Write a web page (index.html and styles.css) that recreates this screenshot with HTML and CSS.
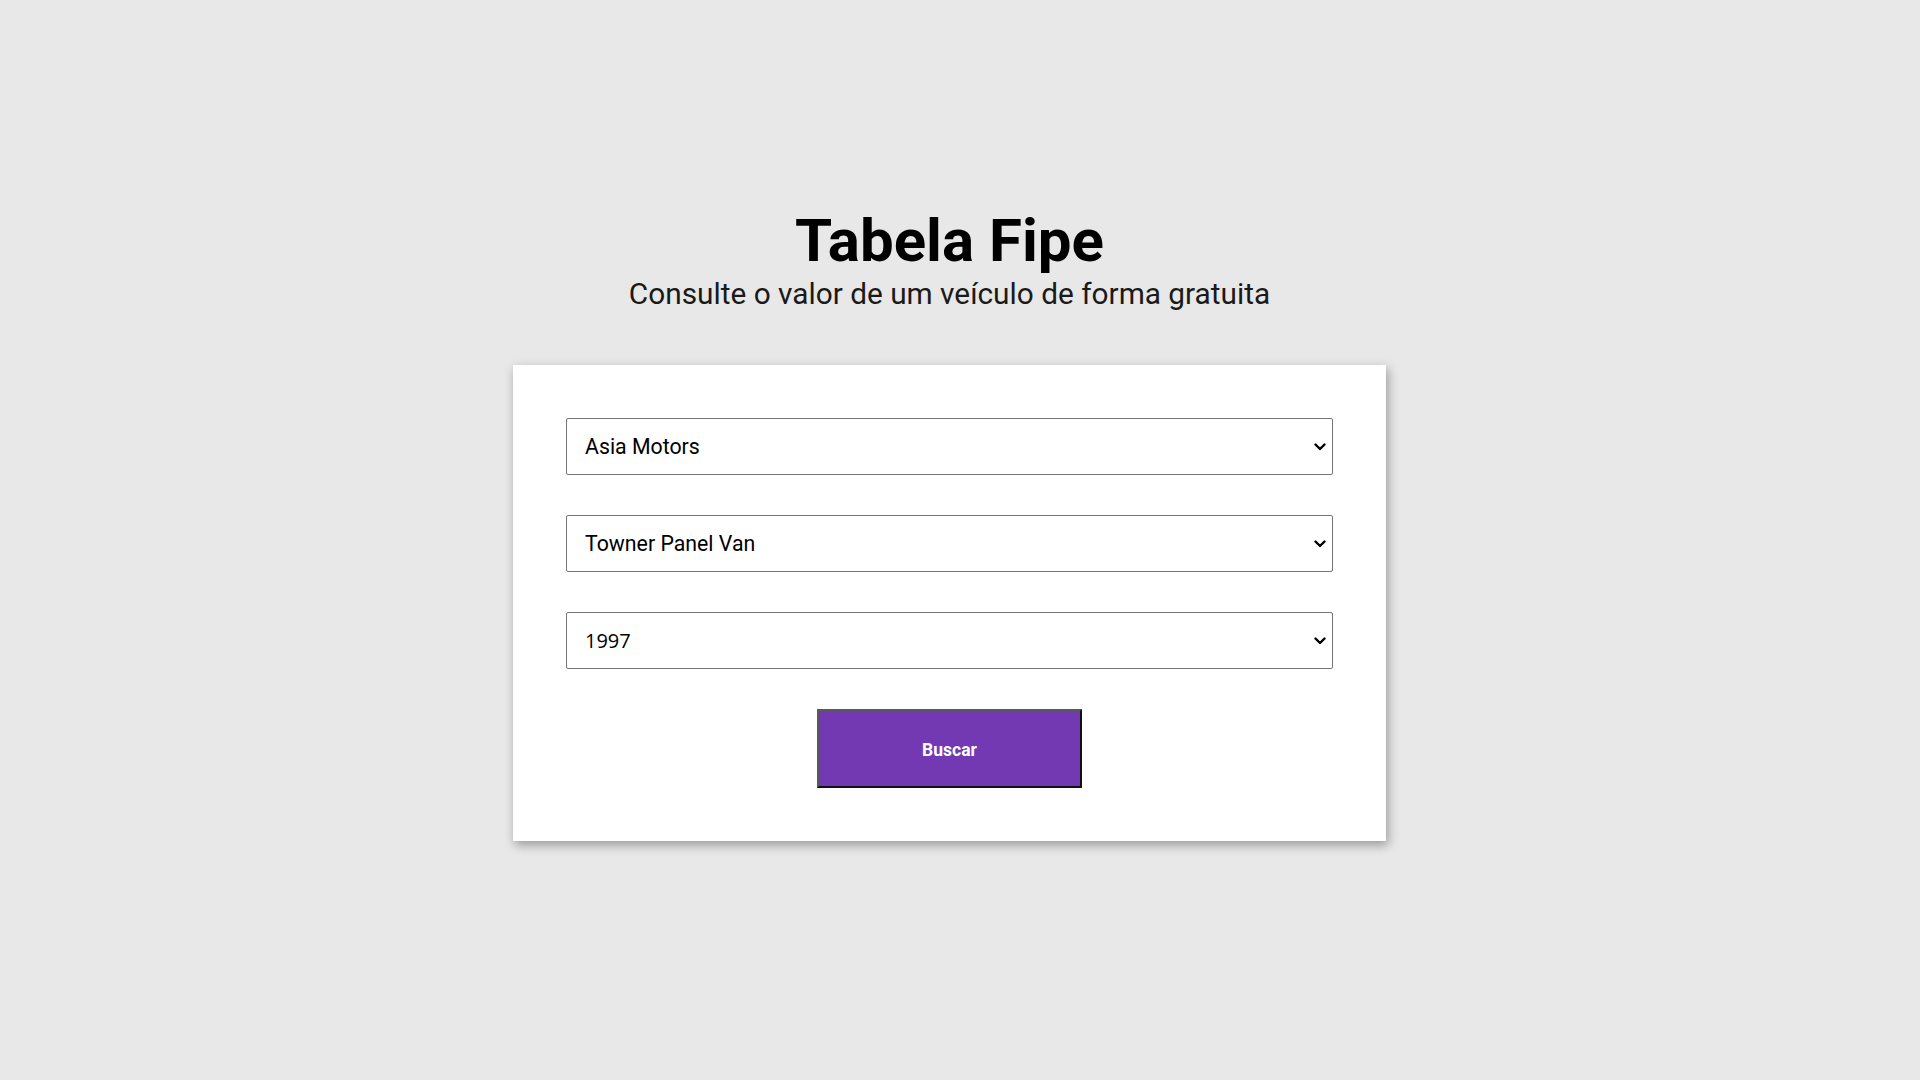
FILE: index.html
```html
<!DOCTYPE html>
<html lang="pt-BR">
<head>
<meta charset="utf-8">
<title>Tabela Fipe</title>
<link rel="stylesheet" href="styles.css">
</head>
<body>
<main class="page">
  <header class="hero">
    <h1 class="title">Tabela Fipe</h1>
    <p class="subtitle">Consulte o valor de um veículo de forma gratuita</p>
  </header>
  <form class="card">
    <div class="select-wrap">
      <select class="field">
        <option>Asia Motors</option>
      </select>
      <svg class="chev" viewBox="0 0 12 8" width="12" height="8" aria-hidden="true"><path d="M1.5 1.5 L6 6 L10.5 1.5" fill="none" stroke="#000" stroke-width="2.4" stroke-linecap="round" stroke-linejoin="round"/></svg>
    </div>
    <div class="select-wrap">
      <select class="field">
        <option>Towner Panel Van</option>
      </select>
      <svg class="chev" viewBox="0 0 12 8" width="12" height="8" aria-hidden="true"><path d="M1.5 1.5 L6 6 L10.5 1.5" fill="none" stroke="#000" stroke-width="2.4" stroke-linecap="round" stroke-linejoin="round"/></svg>
    </div>
    <div class="select-wrap">
      <select class="field field-year">
        <option>1997</option>
      </select>
      <svg class="chev" viewBox="0 0 12 8" width="12" height="8" aria-hidden="true"><path d="M1.5 1.5 L6 6 L10.5 1.5" fill="none" stroke="#000" stroke-width="2.4" stroke-linecap="round" stroke-linejoin="round"/></svg>
    </div>
    <button type="button" class="btn">Buscar</button>
  </form>
</main>
</body>
</html>
```
FILE: styles.css
```css
* { box-sizing: border-box; }
html, body { margin: 0; padding: 0; }
body {
  background: #e8e8e8;
  font-family: Roboto, "Liberation Sans", sans-serif;
  color: #000;
  min-height: 100vh;
}
.page {
  width: calc(100% - 21px);
  display: flex;
  flex-direction: column;
  align-items: center;
  padding-top: 211px;
}
.hero {
  display: flex;
  flex-direction: column;
  align-items: center;
}
.title {
  margin: 0;
  font-size: 60px;
  line-height: 60px;
  font-weight: 700;
  color: #000;
}
.subtitle {
  margin: 8px 0 0;
  font-size: 29.8px;
  line-height: 30px;
  font-weight: 400;
  color: #1a1a1a;
}
.card {
  margin-top: 56px;
  width: 873px;
  background: #fff;
  padding: 53px;
  display: flex;
  flex-direction: column;
  gap: 40px;
  box-shadow: 2px 4px 10px rgba(0, 0, 0, 0.35);
}
.select-wrap {
  position: relative;
  height: 57px;
}
.field {
  -webkit-appearance: none;
  appearance: none;
  display: block;
  height: 57px;
  width: 100%;
  border: 1px solid #767676;
  border-radius: 2px;
  background-color: #fff;
  padding: 0 30px 0 18px;
  font-family: Roboto, "Liberation Sans", sans-serif;
  font-size: 21.3px;
  color: #000;
  outline: none;
}
.field-year {
  font-family: "Open Sans", Roboto, sans-serif;
  font-size: 20px;
}
.chev {
  position: absolute;
  right: 7px;
  top: 25px;
  pointer-events: none;
}
.btn {
  align-self: center;
  width: 265px;
  height: 79px;
  background: #7239b3;
  color: #fff;
  font-family: Roboto, "Liberation Sans", sans-serif;
  font-weight: 700;
  font-size: 17.5px;
  border-style: solid;
  border-width: 2px;
  border-color: #5a5a5a #111 #111 #5a5a5a;
  padding: 2px 0 0;
}
```
